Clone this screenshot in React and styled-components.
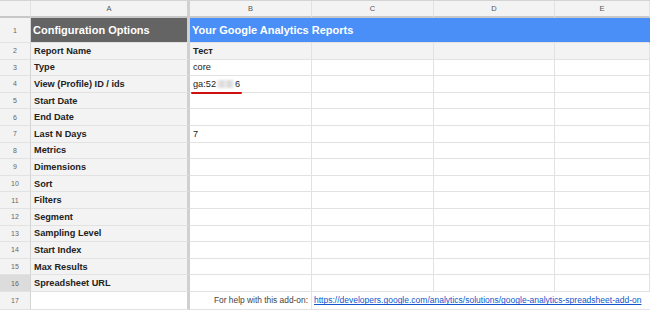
import React from 'react'
import styled, { createGlobalStyle } from 'styled-components'

const Global = createGlobalStyle`
  body {
    margin: 0;
    background: #fff;
    font-family: "Liberation Sans", Arial, sans-serif;
    overflow: hidden;
  }
`

const Sheet = styled.div`
  display: grid;
  grid-template-columns: 31px 159px 122px 122px 121px 1fr;
  grid-template-rows: 17px 25px repeat(15, 16.6px) 1fr;
  width: 650px;
  height: 310px;
  border-top: 1px solid #d4d4d4;
  box-sizing: border-box;
  overflow: hidden;
`

const Cell = styled.div`
  box-sizing: border-box;
  border-right: ${p => (p.$frozen ? '3px solid #d0d0d0' : '1px solid #e2e2e2')};
  border-bottom: 1px solid #e2e2e2;
  background: ${p => p.$bg || '#fff'};
  color: #222;
  font-size: 9.2px;
  font-weight: ${p => (p.$bold ? 700 : 400)};
  padding: 0 3px;
  display: flex;
  align-items: center;
  white-space: nowrap;
  overflow: ${p => (p.$spill ? 'visible' : 'hidden')};
  min-width: 0;
`

const ColHead = styled(Cell)`
  background: #f3f3f3;
  border-bottom: 2px solid #c8c8c8;
  justify-content: center;
  font-size: 7.5px;
  color: #555;
  padding: 0;
`

const RowNum = styled(Cell)`
  background: ${p => (p.$active ? '#dcdcdc' : '#f3f3f3')};
  justify-content: center;
  font-size: 7px;
  color: #666;
  padding: 0;
  border-right: 1px solid #d4d4d4;
`

const Title = styled(Cell)`
  grid-column: ${p => p.$span || 'auto'};
  background: ${p => p.$bg};
  border-right-color: ${p => (p.$frozen ? '#d0d0d0' : p.$bg)};
  color: #fff;
  font-weight: 700;
  font-size: 11px;
  padding-left: 2px;
`

const Masked = styled.span`
  position: relative;
  z-index: 1;
  color: #222;
  &::after {
    content: '';
    position: absolute;
    left: -2px;
    right: -2px;
    bottom: -5px;
    height: 2px;
    background: #d01010;
    border-radius: 1px;
  }
`

const Blur = styled.span`
  display: inline-block;
  width: 17px;
  height: 8px;
  margin: 0 1px;
  vertical-align: -1px;
  background: linear-gradient(90deg, #eee, #d9d9d9 30%, #ececec 50%, #d6d6d6 70%, #f0f0f0);
  filter: blur(1px);
`

const HelpText = styled(Cell)`
  justify-content: flex-end;
  color: #444;
  font-size: 8.4px;
  padding-right: 3px;
`

const LinkCell = styled(Cell)`
  grid-column: 4 / span 3;
  border-right: none;
  padding-left: 2px;
  font-size: 8.5px;
  overflow: visible;
`

const HelpLink = styled.a`
  color: #1155cc;
  text-decoration: underline;
`

const labels = [
  'Report Name',
  'Type',
  'View (Profile) ID / ids',
  'Start Date',
  'End Date',
  'Last N Days',
  'Metrics',
  'Dimensions',
  'Sort',
  'Filters',
  'Segment',
  'Sampling Level',
  'Start Index',
  'Max Results',
  'Spreadsheet URL',
]

const values = {
  2: 'Тест',
  3: 'core',
  7: '7',
}

export default function App() {
  return (
    <>
      <Global />
      <Sheet>
        <ColHead />
        <ColHead $frozen>A</ColHead>
        <ColHead>B</ColHead>
        <ColHead>C</ColHead>
        <ColHead>D</ColHead>
        <ColHead>E</ColHead>

        <RowNum>1</RowNum>
        <Title $frozen $bg="#646464">Configuration Options</Title>
        <Title $bg="#4a8ff7" $span="3 / span 4">Your Google Analytics Reports</Title>

        {labels.map((label, i) => {
          const row = i + 2
          const grey = row === 2 ? '#f3f3f3' : null
          return (
            <React.Fragment key={label}>
              <RowNum $active={row === 16}>{row}</RowNum>
              <Cell $frozen $bold $bg="#f3f3f3">{label}</Cell>
              <Cell $bg={grey} $bold={row === 2} $spill={row === 4}>
                {row === 4 ? (
                  <Masked>ga:52<Blur />6</Masked>
                ) : (
                  values[row]
                )}
              </Cell>
              <Cell $bg={grey} />
              <Cell $bg={grey} />
              <Cell $bg={grey} />
            </React.Fragment>
          )
        })}

        <RowNum>17</RowNum>
        <Cell $frozen />
        <HelpText>For help with this add-on:</HelpText>
        <LinkCell>
          <HelpLink href="#">https://developers.google.com/analytics/solutions/google-analytics-spreadsheet-add-on</HelpLink>
        </LinkCell>
      </Sheet>
    </>
  )
}
